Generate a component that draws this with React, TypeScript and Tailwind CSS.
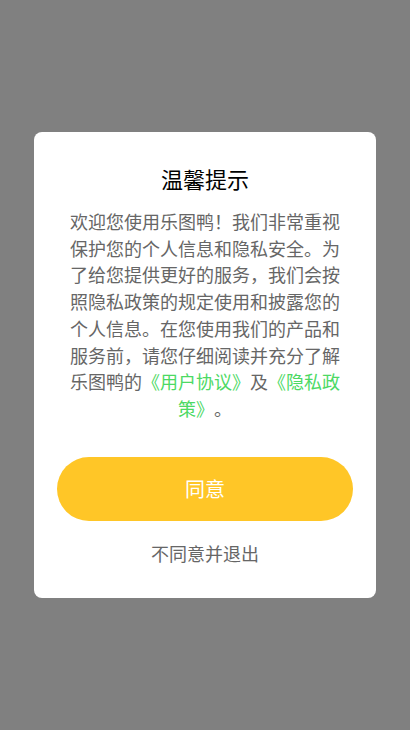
import React from "react";

export default function App() {
  return (
    <div
      className="w-[410px] h-[730px] bg-[#808080] flex items-center justify-center [text-spacing-trim:space-all]"
      style={{ fontFamily: '"Noto Sans CJK SC", "Noto Sans", sans-serif' }}
    >
      <div className="w-[342px] h-[466px] bg-white rounded-[8px] flex flex-col items-center pt-[31px] px-[23px]">
        <div className="text-[22px] leading-[30px] text-black">温馨提示</div>
        <p className="mt-[15px] w-[274px] text-center text-[18px] leading-[26.7px] text-[#666666] [text-spacing-trim:space-all]">
          欢迎您使用乐图鸭！我们非常重视保护您的个人信息和隐私安全。为了给您提供更好的服务，我们会按照隐私政策的规定使用和披露您的个人信息。在您使用我们的产品和服务前，请您仔细阅读并充分了解乐图鸭的
          <span className="text-[#4cd964]">《用户协议》</span>及
          <span className="text-[#4cd964]">《隐私政策》</span>。
        </p>
        <button className="mt-[35px] w-[296px] h-[64px] rounded-full bg-[#ffc627] text-white text-[20px] flex items-center justify-center">
          同意
        </button>
        <div className="mt-[19px] text-[18px] leading-[26px] text-[#666666]">不同意并退出</div>
      </div>
    </div>
  );
}
